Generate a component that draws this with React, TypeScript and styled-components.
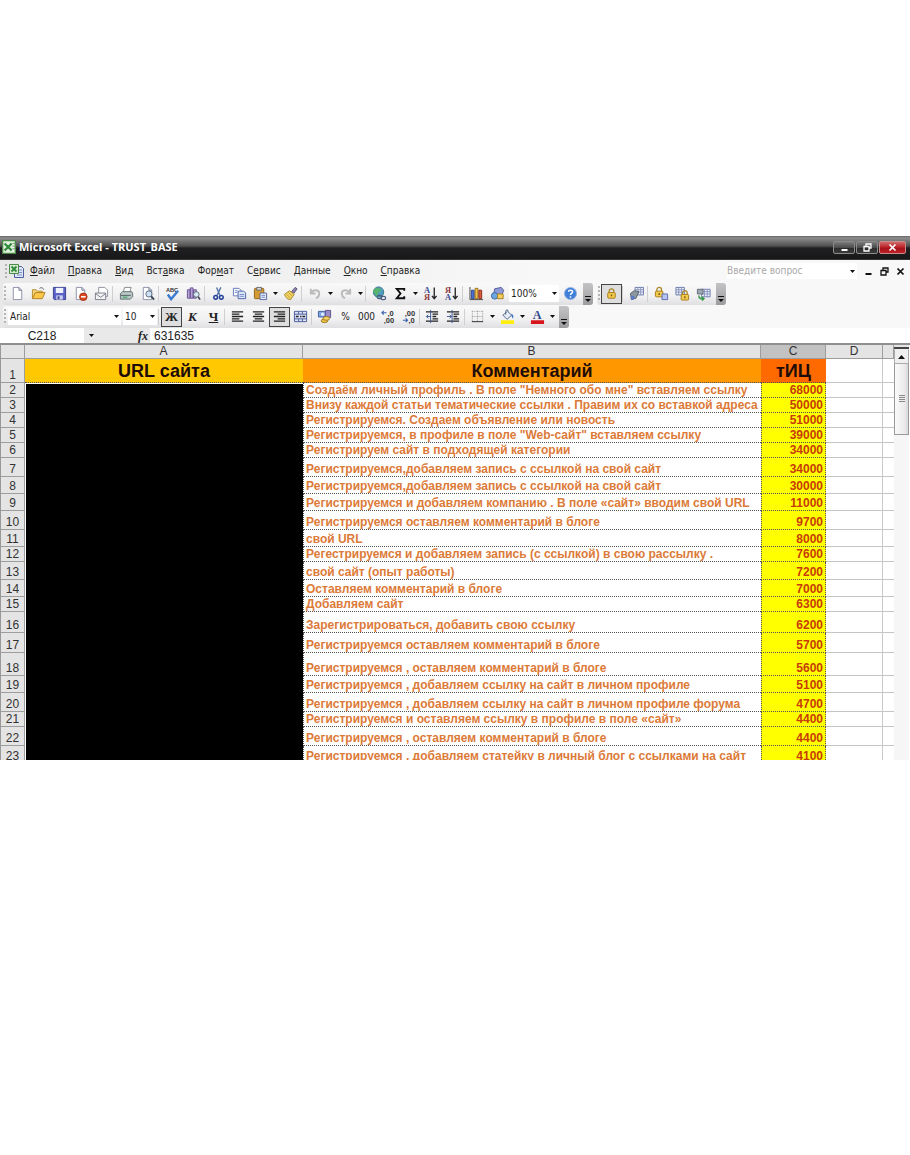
import React from 'react';
import styled, { createGlobalStyle, css } from 'styled-components';

const UI_FONT = '"DejaVu Sans Condensed", "DejaVu Sans", "Noto Sans", sans-serif';
const CELL_FONT = '"Liberation Sans", Arial, sans-serif';

const GlobalStyle = createGlobalStyle`
  * { box-sizing: border-box; }
  body { margin: 0; background: #fff; }
  button, input, select { font: inherit; color: inherit; margin: 0; padding: 0; border: 0; background: none; }
`;

const Page = styled.main`
  padding: 236px 0;
  font-family: ${UI_FONT};
  font-size: 10px;
  color: #222;
`;

const TitleBar = styled.header`
  display: flex;
  align-items: center;
  height: 24px;
  padding: 0 4px 2px 2px;
  gap: 3px;
  background: linear-gradient(#666 0, #8c8c8c 2px, #505050 10px, #202022 12px, #18181a 23px, #555 24px);
`;

const Title = styled.h1`
  flex: 1;
  margin: 0;
  font: bold 11px/16px "Open Sans", "Noto Sans", sans-serif;
  color: #fff;
`;

const WindowButtons = styled.div`
  display: flex;
  gap: 1px;
`;

const WindowButton = styled.button<{ $danger?: boolean }>`
  display: flex;
  align-items: center;
  justify-content: center;
  width: ${p => (p.$danger ? 27 : 22)}px;
  height: 13px;
  border: 1px solid ${p => (p.$danger ? '#c98a8a' : '#8b8b8b')};
  border-radius: 2px;
  background: ${p =>
    p.$danger
      ? 'linear-gradient(#cf6a6a, #b81f25 50%, #a01018 52%, #c02028)'
      : 'linear-gradient(#7c7c7c, #4c4c4c 50%, #2a2a2a 52%, #3a3a3a)'};
`;

const Chrome = styled.div`
  background: linear-gradient(90deg, #e8e8e8, #f8f8f8 60%);
`;

const MenuBar = styled.nav`
  display: flex;
  align-items: center;
  height: 22px;
  padding: 0 4px 0 4px;
`;

const MenuList = styled.div`
  display: flex;
  flex: 1;
  gap: 13px;
  margin-left: 6px;
`;

const MenuItem = styled.button`
  line-height: 16px;
  white-space: nowrap;
  u { text-underline-offset: 1px; }
`;

const Question = styled.div`
  display: flex;
  align-items: center;
  width: 130px;
  height: 16px;
  background: #fff;
  input {
    flex: 1;
    min-width: 0;
    line-height: 14px;
    &::placeholder { color: #a9a9a9; opacity: 1; }
  }
`;

const DocButtons = styled.div`
  display: flex;
  gap: 5px;
  margin-left: 6px;
  button { display: flex; width: 11px; height: 11px; align-items: center; justify-content: center; }
`;

const ToolRow = styled.div<{ $h: number }>`
  display: flex;
  align-items: center;
  height: ${p => p.$h}px;
  padding-left: 3px;
`;

const Toolbar = styled.div<{ $sep: number }>`
  display: flex;
  align-items: center;
  height: 22px;
  margin-right: 4px;
  border-radius: 3px;
  background: linear-gradient(#f9f9f9, #f1f1f2 60%, #dfdfe2);
  --sep: ${p => p.$sep}px;
`;

const Grip = styled.span`
  width: 2px;
  height: 15px;
  margin: 0 1px;
  background: repeating-linear-gradient(#b4b4b4 0 2px, transparent 2px 4px);
`;

const Separator = styled.span`
  width: var(--sep);
  height: 16px;
  border-left: 1px solid #cfcfd2;
`;

const ToolButton = styled.button<{ $on?: boolean; $dim?: boolean }>`
  display: flex;
  align-items: center;
  justify-content: center;
  width: 21px;
  height: 20px;
  opacity: ${p => (p.$dim ? 0.45 : 1)};
  ${p => p.$on && css`
    border: 1px solid #444;
    background: #dedede;
  `}
`;

const ArrowButton = styled.button`
  display: flex;
  align-items: center;
  justify-content: center;
  width: 9px;
  height: 20px;
`;

const OverflowTab = styled.button`
  display: flex;
  align-items: flex-end;
  justify-content: center;
  width: 10px;
  height: 22px;
  margin-left: 2px;
  padding-bottom: 2px;
  border-radius: 0 3px 3px 0;
  background: linear-gradient(#c4c4c6, #9c9c9e);
`;

const ComboBox = styled.div<{ $w: number }>`
  display: flex;
  align-items: center;
  width: ${p => p.$w}px;
  height: 17px;
  margin: 0 1px;
  background: #fff;
  select {
    flex: 1;
    min-width: 0;
    height: 16px;
    padding-left: 2px;
    line-height: 16px;
    appearance: none;
  }
`;

const FormulaRow = styled.div`
  display: flex;
  align-items: center;
  height: 15px;
  background: #e9e9e9;
  font-family: ${CELL_FONT};
  font-size: 12px;
`;

const NameBox = styled.input`
  width: 84px;
  height: 15px;
  background: #fff;
  text-align: center;
`;

const FxArea = styled.div`
  display: flex;
  align-items: center;
  justify-content: space-between;
  width: 66px;
  padding: 0 2px 0 3px;
`;

const FxButton = styled.button`
  font: italic bold 12px/14px "Liberation Serif", serif;
`;

const FormulaInput = styled.input`
  flex: 1;
  min-width: 0;
  height: 15px;
  padding-left: 4px;
  background: #fff;
`;

const Workbook = styled.div`
  display: flex;
  height: 417px;
  overflow: hidden;
  border-top: 2px solid #8f8f8f;
  border-left: 1px solid #999;
`;

const Sheet = styled.table`
  flex: 1;
  width: 100%;
  table-layout: fixed;
  border-collapse: separate;
  border-spacing: 0;
  font-family: ${CELL_FONT};
  align-self: flex-start;
  td, th { padding: 0; }
`;

const Heading = styled.th<{ $active?: boolean }>`
  height: 14px;
  font: 12px/13px ${CELL_FONT};
  color: #333;
  background: ${p => (p.$active ? '#c2c2c2' : '#e4e4e4')};
  border-right: 1px solid #9d9d9d;
  border-bottom: 1px solid #9d9d9d;
`;

const RowHeading = styled(Heading)`
  height: auto;
  vertical-align: bottom;
`;

const Caption = styled.td<{ $bg: string }>`
  height: 24px;
  font: bold 18px/22px ${CELL_FONT};
  text-align: center;
  color: #1d0c08;
  background: ${p => p.$bg};
  border-bottom: 1px dotted #555;
`;

const Hidden = styled.td`
  background: #000;
  border: solid #fff;
  border-width: 1px 0 0 1px;
`;

const Fit = styled.div<{ $h: number }>`
  display: flex;
  align-items: flex-end;
  height: ${p => p.$h - 1}px;
  overflow: hidden;
  line-height: 14px;
  white-space: nowrap;
`;

const Comment = styled.td`
  border: 1px dotted #555;
  border-width: 0 0 1px 1px;
  font-size: 12px;
  font-weight: bold;
  color: #dc7a38;
  ${Fit} { padding-left: 2px; }
`;

const Score = styled.td`
  border: 1px dotted #555;
  border-width: 0 1px 1px 1px;
  font-size: 12px;
  font-weight: bold;
  color: #c73c08;
  background: #ff0;
  ${Fit} { justify-content: flex-end; padding-right: 2px; }
`;

const Blank = styled.td`
  border-right: 1px solid #c9c9c9;
  border-bottom: 1px solid #c4c4c4;
  &:last-child { border-right: 0; }
`;

const ScrollBar = styled.div`
  display: flex;
  flex-direction: column;
  width: 15px;
  margin-right: 1px;
  background: #f6f6f6;
`;

const SplitBox = styled.span`
  height: 4px;
  border-bottom: 2px solid #444;
  background: #e5e5e5;
`;

const ScrollUp = styled.button`
  display: flex;
  align-items: center;
  justify-content: center;
  height: 15px;
  border: 1px solid #aaa;
  border-top-color: #eee;
  background: #efefef;
`;

const ScrollThumb = styled.div`
  display: flex;
  align-items: center;
  justify-content: center;
  height: 71px;
  border: 1px solid #999;
  border-top: 0;
  background: linear-gradient(90deg, #fafafa, #ececec 70%, #d8d8d8);
`;

const Icon = ({ children, size = 16 }: { children: React.ReactNode; size?: number }) => (
  <svg width={size} height={size} viewBox="0 0 16 16" fill="none" aria-hidden="true">{children}</svg>
);

const Caret = () => (
  <svg width="5" height="3" viewBox="0 0 5 3" aria-hidden="true"><path d="M0 0h5L2.5 3z" fill="#111" /></svg>
);

const sheetShape = <><path d="M3.5 1.5h6l3 3v10h-9z" fill="#fff" stroke="#8a8fa8" /><path d="M9.500 1.500v3h3" stroke="#6f7590" /></>;
const padlock = (x: number, y: number) => (
  <g transform={`translate(${x} ${y})`}>
    <path d="M2 5V3a2.500 2.500 0 0 1 5 0v2" stroke="#a98a2c" strokeWidth="1.400" />
    <rect x=".5" y="4.500" width="8" height="6" rx="1" fill="#f2ca4c" stroke="#a87a1a" />
    <path d="M4.500 6.500v2" stroke="#7a5510" strokeWidth="1.400" />
  </g>
);
const miniGrid = (x: number, y: number) => (
  <g transform={`translate(${x} ${y})`}>
    <path d="M.5.5h9v8h-9z" fill="#eef2fb" stroke="#6877a8" />
    <path d="M.5 3h9M.5 5.500h9M3.500.5v8M6.500.5v8" stroke="#8793bd" />
  </g>
);

const icons: Record<string, React.ReactNode> = {
  create: sheetShape,
  open: <><path d="M1.500 13V4h4l1.500 1.500h5V7" fill="#f5d67a" stroke="#b58a2a" /><path d="M1.500 13.500 4.500 7H15l-3 6.500z" fill="#fbc84a" stroke="#b07d1e" /><path d="M9 2.500c2-1.500 4-.5 4.500 1.500" stroke="#666" /></>,
  save: <><path d="M1.500 1.500h13v13h-12l-1-1z" fill="#5a62c8" stroke="#39408f" /><path d="M4 2h8v5.500H4z" fill="#eef1ff" /><path d="M4.500 10h7v4.500h-7z" fill="#c9cdee" /><path d="M6 11h2v3H6z" fill="#39408f" /></>,
  permission: <>{sheetShape}<circle cx="11" cy="11.500" r="4" fill="#dd4a22" stroke="#a62c10" /><path d="M8.500 11.500h5" stroke="#fff" strokeWidth="1.600" /></>,
  mail: <><path d="M5 1.500h6.500l3 3V11H5z" fill="#fff" stroke="#8c909c" /><path d="M1.500 7.500h11v7h-11z" fill="#f4f4f4" stroke="#777c88" /><path d="m1.500 8 5.500 4 5.500-4" stroke="#777c88" /></>,
  print: <><path d="M4.500 6.500 6 1.500h7l-1.500 5" fill="#fff" stroke="#888" /><path d="m1.500 8 2.500-2h9.500l1 1.500v4l-2.500 2.500h-10.500z" fill="#b9c7c6" stroke="#60706f" /><path d="M2 10h10.500" stroke="#4f5f5e" /><path d="M4 12h5" stroke="#57b07c" strokeWidth="1.600" /></>,
  preview: <>{sheetShape}<circle cx="9.500" cy="8.500" r="3.300" fill="#cfe2f5" stroke="#5a6a80" /><path d="m12 11 3 3.500" stroke="#3e4656" strokeWidth="2" /></>,
  spell: <><text x="1" y="6" fontFamily="Liberation Sans, sans-serif" fontSize="6" fontWeight="bold" fill="#333">ABC</text><path d="m3 9 3.500 5L14 5" stroke="#3d7bd0" strokeWidth="2.600" /></>,
  research: <><path d="M1.500 4h3v9h-3zM4.500 2h3v11h-3zM8 4h3v9H8z" fill="#b9a1d4" stroke="#685394" /><circle cx="11" cy="9" r="3" fill="#d8e8f8" stroke="#566" /><path d="m13 11.500 2 3" stroke="#445" strokeWidth="1.800" /></>,
  cut: <><path d="M6 1.500 9.500 10M10.500 1.500 6.500 10" stroke="#5a76a8" strokeWidth="1.500" /><circle cx="5" cy="12" r="2" stroke="#27439a" strokeWidth="1.600" /><circle cx="11" cy="12" r="2" stroke="#27439a" strokeWidth="1.600" /></>,
  copy: <><path d="M1.500 2.500h6l2 2v6h-8z" fill="#fff" stroke="#6074b4" /><path d="M6.500 5.500h6l2 2v6h-8z" fill="#dfe8fb" stroke="#4961a8" /><path d="M8 9h5M8 11h5M3 5h3M3 7h3" stroke="#7289c8" /></>,
  paste: <><rect x="1.500" y="2.500" width="10" height="11" rx="1" fill="#d59a32" stroke="#8d6219" /><path d="M4 1.500h5v3H4z" fill="#d8d8d8" stroke="#666" /><path d="M7.500 7.500h7v7h-7z" fill="#e6ecfa" stroke="#5566a0" /><path d="M9 10h4M9 12h4" stroke="#7289c8" /></>,
  brush: <><path d="m9 6 4-4.500 2 1.500-3.500 5z" fill="#8d7fb0" stroke="#5c5478" /><path d="M1.500 9 7 5l5 4-4 5.500c-3 0-5-2-6.500-5.500z" fill="#f2d463" stroke="#a9872d" /><path d="m4 9 4 4M6 7l4 4" stroke="#c09a38" /></>,
  undo: <path d="M3 3v5h5M3.500 7.500C6 3 12 4 12 8c0 2-1 4-3.500 5" stroke="#777" strokeWidth="2" />,
  redo: <path d="M13 3v5H8M12.500 7.500C10 3 4 4 4 8c0 2 1 4 3.500 5" stroke="#777" strokeWidth="2" />,
  link: <><circle cx="7" cy="6.500" r="5.500" fill="#4f9fc0" stroke="#2f6f86" /><path d="M3 3c3-2 4 0 6 0s0 3-2 4 1 3-1 4-2-3-4-4 0-3 1-4z" fill="#58b46c" /><rect x="5.500" y="10" width="5" height="3.500" rx="1.700" stroke="#4d5f80" strokeWidth="1.300" /><rect x="9.500" y="11" width="5" height="3.500" rx="1.700" stroke="#4d5f80" strokeWidth="1.300" /></>,
  sum: <path d="M12 5V3H4l4 5-4 5h8v-2" stroke="#111" strokeWidth="2" />,
  sortAsc: <><text x="1" y="7.500" fontFamily="Liberation Serif, serif" fontSize="9" fontWeight="bold" fill="#3a4a90">А</text><text x="1" y="15" fontFamily="Liberation Serif, serif" fontSize="9" fontWeight="bold" fill="#8b3a3a">Я</text><path d="M12 1.500v12m-2.500-3 2.500 3 2.500-3" stroke="#222" strokeWidth="1.400" /></>,
  sortDesc: <><text x="1" y="7.500" fontFamily="Liberation Serif, serif" fontSize="9" fontWeight="bold" fill="#8b3a3a">Я</text><text x="1" y="15" fontFamily="Liberation Serif, serif" fontSize="9" fontWeight="bold" fill="#3a4a90">А</text><path d="M12 1.500v12m-2.500-3 2.500 3 2.500-3" stroke="#222" strokeWidth="1.400" /></>,
  chart: <><path d="M2.500 4.500h3v9h-3z" fill="#4a6fd0" stroke="#2c438c" /><path d="M6.500 2.500h3v11h-3z" fill="#f0c04a" stroke="#96701a" /><path d="M10.500 4.500h3v9h-3z" fill="#d85a3a" stroke="#8a2c18" /><path d="M1 1v13.500h14" stroke="#444" /></>,
  draw: <><path d="m5 3 7-1.500 2.500 3-2 6-7 1.500L4 8z" fill="#8f9ad8" stroke="#4e579c" /><circle cx="5" cy="10.500" r="3.500" fill="#6ea6e0" stroke="#3a67a0" /><path d="M8 8.500h6v5H8z" fill="#f3cf5c" stroke="#a27c20" /></>,
  help: <><circle cx="8" cy="8" r="6.500" fill="#3f7fd8" stroke="#9db8e0" /><path d="M5.800 6.200C6 3.800 10.300 4 10.200 6.300 10 8 8 7.800 8 9.700M8 11v1.500" stroke="#fff" strokeWidth="1.600" /></>,
  lock: padlock(3.500, 2.500),
  share: <>{miniGrid(6, 1)}<path d="m1.500 8 4-3 5 1-3 7-5 1.500z" fill="#8d97a0" stroke="#59636e" /><circle cx="4" cy="12.500" r="2" fill="#5a78cc" /></>,
  lockCell: <>{padlock(1, 1)}<path d="M8.500 8.500h6v6h-6z" fill="#b7c4f0" stroke="#5a6bb0" /></>,
  lockSheet: <>{miniGrid(.5, 1)}{padlock(6, 4.500)}</>,
  lockBook: <>{miniGrid(5.500, 3)}<path d="M1.500 3.500h6v5h-6z" fill="#9ea8b4" stroke="#606a78" /><path d="M3 10c0 3 2 4 5 3.500m-2-2 2.500 2-2 2" stroke="#3c9a4c" strokeWidth="1.600" /></>,
  left: <path d="M2 3h12M2 5.500h8M2 8h12M2 10.500h8M2 13h12" stroke="#222" strokeWidth="1.400" />,
  center: <path d="M2 3h12M4 5.500h8M2 8h12M4 10.500h8M2 13h12" stroke="#222" strokeWidth="1.400" />,
  right: <path d="M2 3h12M6 5.500h8M2 8h12M6 10.500h8M2 13h12" stroke="#222" strokeWidth="1.400" />,
  merge: <><path d="M1.500 2.500h13v11h-13z" fill="#dfe6fa" stroke="#4a5a98" /><path d="M1.500 5.500h13M1.500 10.500h13M6 2.500v3M10 2.500v3M6 10.500v3M10 10.500v3" stroke="#4a5a98" /><path d="M3 8h3m4 0h3M7.500 8h1.500" stroke="#222" strokeWidth="1.600" /></>,
  currency: <><path d="M1.500 2.500h10v6h-10z" fill="#7fa6e0" stroke="#3f5e9c" /><path d="M9 1.500h5.500V9H9z" fill="#9a8cc8" stroke="#5f528c" /><circle cx="6" cy="5.500" r="1.700" fill="#e8f0ff" /><ellipse cx="8" cy="12.500" rx="3.500" ry="2" fill="#f1c548" stroke="#99741c" /><ellipse cx="10" cy="10" rx="3.500" ry="2" fill="#f6d468" stroke="#99741c" /></>,
  decMore: <><path d="M7 4H2m2-2L2 4l2 2" stroke="#3b62b0" strokeWidth="1.200" /><text x="8" y="7.500" fontFamily="Liberation Sans, sans-serif" fontSize="8" fontWeight="bold" fill="#333">,0</text><text x="4" y="15" fontFamily="Liberation Sans, sans-serif" fontSize="8" fontWeight="bold" fill="#333">,00</text></>,
  decLess: <><text x="4" y="7.500" fontFamily="Liberation Sans, sans-serif" fontSize="8" fontWeight="bold" fill="#333">,00</text><path d="M2 12h5m-2-2 2 2-2 2" stroke="#3b62b0" strokeWidth="1.200" /><text x="8" y="15" fontFamily="Liberation Sans, sans-serif" fontSize="8" fontWeight="bold" fill="#333">,0</text></>,
  outdent: <><path d="M1 3h13M8 5.500h6M8 8h4M8 10.500h6M1 13h13" stroke="#222" strokeWidth="1.400" /><path d="M6.500 8H1.500m2-2-2 2 2 2M6 1v14" stroke="#3b5590" /></>,
  indent: <><path d="M1 3h13M8 5.500h6M8 8h4M8 10.500h6M1 13h13" stroke="#222" strokeWidth="1.400" /><path d="M1 8h5M4 6l2 2-2 2M6.500 1v14" stroke="#3b5590" /></>,
  borders: <><path d="M2.500 2v11M8 2v11M13.500 2v11M2 2.500h12M2 8h12" stroke="#999" strokeDasharray="1 1" /><path d="M2 13.500h12" stroke="#222" /></>,
  fill: <><path d="m3 6.500 5-4 4.500 4-5 4.500z" fill="#e5ecf6" stroke="#56688a" /><path d="M6 6V2.500c0-2 3-2 3 0" stroke="#56688a" /><path d="M12 5c2.500 1 2.500 3 2 5-1.500-1-2-2.500-2-5z" fill="#3f74c8" /><path d="M1 12h14v4H1z" fill="#ffee10" /></>,
  fontColor: <><text x="3" y="11" fontFamily="Liberation Serif, serif" fontSize="13" fontWeight="bold" fill="#34498c">A</text><path d="M1 12h14v4H1z" fill="#d8141c" /></>,
  excel: <><path d="M.5.5h15v15H.5z" fill="#e6f2e2" stroke="#4c8a48" strokeWidth="2" /><path d="m3 4 8 8M11 4l-8 8" stroke="#2f8a3a" strokeWidth="2.600" /><path d="M12 4h3M12 7h3M12 10h3" stroke="#6a9a68" /></>,
  book: <><path d="M6.500 3.500h7l2 2v9h-9z" fill="#dfe6f8" stroke="#4d5fa0" /><path d="M9 7h5M9 9.500h5M9 12h5" stroke="#7f90c8" /><path d="M1.500 1.500h9v9h-9z" fill="#d8ecd4" stroke="#4c8a48" /><path d="m3.500 3.500 5 5M8.500 3.500l-5 5" stroke="#2f8a3a" strokeWidth="1.800" /></>,
};

const GlyphText = styled.span<{ $serif?: boolean; $italic?: boolean; $line?: boolean }>`
  font-family: ${p => (p.$serif ? '"Liberation Serif", serif' : UI_FONT)};
  font-size: ${p => (p.$serif ? 13 : 10)}px;
  font-weight: ${p => (p.$serif ? 'bold' : 'normal')};
  font-style: ${p => (p.$italic ? 'italic' : 'normal')};
  text-decoration: ${p => (p.$line ? 'underline' : 'none')};
  line-height: 16px;
`;

const Tool = ({ name, label, on, dim }: { name: string; label: string; on?: boolean; dim?: boolean }) => (
  <ToolButton type="button" aria-label={label} aria-pressed={on} $on={on} $dim={dim}><Icon size={15}>{icons[name]}</Icon></ToolButton>
);

const Drop = ({ label }: { label: string }) => (
  <ArrowButton type="button" aria-label={label}><Caret /></ArrowButton>
);

const Overflow = () => (
  <OverflowTab type="button" aria-label="Параметры панели">
    <svg width="6" height="7" viewBox="0 0 6 7" aria-hidden="true"><path d="M0 .5h6" stroke="#111" /><path d="M0 3h6L3 6z" fill="#111" /></svg>
  </OverflowTab>
);

const Combo = ({ label, value, w }: { label: string; value: string; w: number }) => (
  <ComboBox $w={w}>
    <select aria-label={label} defaultValue={value}><option>{value}</option></select>
    <Drop label={label} />
  </ComboBox>
);

const menus: [string, string, string][] = [
  ['', 'Ф', 'айл'], ['', 'П', 'равка'], ['', 'В', 'ид'], ['Вст', 'а', 'вка'], ['Фор', 'м', 'ат'],
  ['С', 'е', 'рвис'], ['', 'Д', 'анные'], ['', 'О', 'кно'], ['', 'С', 'правка'],
];

const rows: [number, string, number][] = [
  [15, 'Создаём личный профиль . В поле "Немного обо мне" вставляем ссылку', 68000],
  [15, 'Внизу каждой статьи тематические ссылки . Правим их со вставкой адреса сайта', 50000],
  [15, 'Регистрируемся. Создаем объявление или новость', 51000],
  [15, 'Регистрируемся, в профиле в поле "Web-сайт" вставляем ссылку', 39000],
  [15, 'Регистрируем сайт в подходящей категории', 34000],
  [19, 'Регистрируемся,добавляем запись с ссылкой на свой сайт', 34000],
  [17, 'Регистрируемся,добавляем запись с ссылкой на свой сайт', 30000],
  [17, 'Регистрируемся и добавляем компанию . В поле «сайт» вводим свой URL', 11000],
  [19, 'Регистрируемся оставляем комментарий в блоге', 9700],
  [17, 'свой URL', 8000],
  [15, 'Регестрируемся и добавляем запись (с ссылкой) в свою рассылку .', 7600],
  [18, 'свой сайт (опыт работы)', 7200],
  [17, 'Оставляем комментарий в блоге', 7000],
  [15, 'Добавляем сайт', 6300],
  [21, 'Зарегистрироваться, добавить свою ссылку', 6200],
  [20, 'Регистрируемся оставляем комментарий в блоге', 5700],
  [23, 'Регистрируемся , оставляем комментарий в блоге', 5600],
  [17, 'Регистрируемся , добавляем ссылку на сайт в личном профиле', 5100],
  [19, 'Регистрируемся , добавляем ссылку на сайт в личном профиле форума', 4700],
  [15, 'Регистрируемся и оставляем ссылку в профиле в поле «сайт»', 4400],
  [19, 'Регистрируемся , оставляем комментарий в блоге', 4400],
  [18, 'Регистрируемся , добавляем статейку в личный блог с ссылками на сайт', 4100],
];

const MinGlyph = ({ color }: { color: string }) => (
  <svg width="9" height="9" viewBox="0 0 9 9" aria-hidden="true"><path d="M1.500 7h6" stroke={color} strokeWidth="2" /></svg>
);
const RestoreGlyph = ({ color }: { color: string }) => (
  <svg width="9" height="9" viewBox="0 0 9 9" fill="none" aria-hidden="true"><path d="M3 3V1h5v4H6M1 3.500h5V8H1z" stroke={color} strokeWidth="1.300" /></svg>
);
const CloseGlyph = ({ color }: { color: string }) => (
  <svg width="9" height="9" viewBox="0 0 9 9" fill="none" aria-hidden="true"><path d="m1.500 1.500 6 6m0-6-6 6" stroke={color} strokeWidth="1.700" /></svg>
);

export default function App() {
  return (
    <Page>
      <GlobalStyle />
      <TitleBar>
        <Icon size={14}>{icons.excel}</Icon>
        <Title>Microsoft Excel - TRUST_BASE</Title>
        <WindowButtons>
          <WindowButton type="button" aria-label="Свернуть"><MinGlyph color="#fff" /></WindowButton>
          <WindowButton type="button" aria-label="Восстановить"><RestoreGlyph color="#fff" /></WindowButton>
          <WindowButton type="button" aria-label="Закрыть" $danger><CloseGlyph color="#fff" /></WindowButton>
        </WindowButtons>
      </TitleBar>
      <Chrome>
        <MenuBar>
          <Grip />
          <Icon>{icons.book}</Icon>
          <MenuList>
            {menus.map(([a, b, c]) => <MenuItem type="button" key={a + b + c}>{a}<u>{b}</u>{c}</MenuItem>)}
          </MenuList>
          <Question>
            <input aria-label="Введите вопрос" placeholder="Введите вопрос" />
            <Drop label="Вопросы" />
          </Question>
          <DocButtons>
            <button type="button" aria-label="Свернуть книгу"><MinGlyph color="#111" /></button>
            <button type="button" aria-label="Восстановить книгу"><RestoreGlyph color="#111" /></button>
            <button type="button" aria-label="Закрыть книгу"><CloseGlyph color="#111" /></button>
          </DocButtons>
        </MenuBar>
        <ToolRow $h={23}>
          <Toolbar $sep={4}>
            <Grip />
            <Tool name="create" label="Создать" />
            <Tool name="open" label="Открыть" />
            <Tool name="save" label="Сохранить" />
            <Tool name="permission" label="Разрешения" />
            <Tool name="mail" label="Сообщение" />
            <Separator />
            <Tool name="print" label="Печать" />
            <Tool name="preview" label="Просмотр" />
            <Separator />
            <Tool name="spell" label="Орфография" />
            <Tool name="research" label="Справочные материалы" />
            <Separator />
            <Tool name="cut" label="Вырезать" />
            <Tool name="copy" label="Копировать" />
            <Tool name="paste" label="Вставить" />
            <Drop label="Параметры вставки" />
            <Tool name="brush" label="Формат по образцу" />
            <Separator />
            <Tool name="undo" label="Отменить" dim />
            <Drop label="Список отмены" />
            <Tool name="redo" label="Вернуть" dim />
            <Drop label="Список возврата" />
            <Separator />
            <Tool name="link" label="Гиперссылка" />
            <Tool name="sum" label="Автосумма" />
            <Drop label="Функции" />
            <Tool name="sortAsc" label="По возрастанию" />
            <Tool name="sortDesc" label="По убыванию" />
            <Separator />
            <Tool name="chart" label="Диаграмма" />
            <Tool name="draw" label="Рисование" />
            <Combo label="Масштаб" value="100%" w={50} />
            <Tool name="help" label="Помощь" />
            <Overflow />
          </Toolbar>
          <Toolbar $sep={4}>
            <Grip />
            <Tool name="lock" label="Блокировка" on />
            <Separator />
            <Tool name="share" label="Общий доступ" />
            <Separator />
            <Tool name="lockCell" label="Защитить ячейку" />
            <Tool name="lockSheet" label="Защитить лист" />
            <Tool name="lockBook" label="Защитить книгу" />
            <Overflow />
          </Toolbar>
        </ToolRow>
        <ToolRow $h={23}>
          <Toolbar $sep={3}>
            <Grip />
            <Combo label="Шрифт" value="Arial" w={113} />
            <Combo label="Размер" value="10" w={34} />
            <Separator />
            <ToolButton type="button" aria-label="Полужирный" aria-pressed $on><GlyphText $serif>Ж</GlyphText></ToolButton>
            <ToolButton type="button" aria-label="Курсив"><GlyphText $serif $italic>К</GlyphText></ToolButton>
            <ToolButton type="button" aria-label="Подчеркнутый"><GlyphText $serif $line>Ч</GlyphText></ToolButton>
            <Separator />
            <Tool name="left" label="По левому краю" />
            <Tool name="center" label="По центру" />
            <Tool name="right" label="По правому краю" on />
            <Tool name="merge" label="Объединить" />
            <Separator />
            <Tool name="currency" label="Денежный формат" />
            <ToolButton type="button" aria-label="Процентный формат"><GlyphText>%</GlyphText></ToolButton>
            <ToolButton type="button" aria-label="Формат с разделителями"><GlyphText>000</GlyphText></ToolButton>
            <Tool name="decMore" label="Увеличить разрядность" />
            <Tool name="decLess" label="Уменьшить разрядность" />
            <Separator />
            <Tool name="outdent" label="Уменьшить отступ" />
            <Tool name="indent" label="Увеличить отступ" />
            <Separator />
            <Tool name="borders" label="Границы" />
            <Drop label="Виды границ" />
            <Tool name="fill" label="Цвет заливки" />
            <Drop label="Цвета заливки" />
            <Tool name="fontColor" label="Цвет шрифта" />
            <Drop label="Цвета шрифта" />
            <Overflow />
          </Toolbar>
        </ToolRow>
      </Chrome>
      <FormulaRow>
        <NameBox aria-label="Имя ячейки" defaultValue="C218" />
        <FxArea>
          <Drop label="Список имен" />
          <FxButton type="button">fx</FxButton>
        </FxArea>
        <FormulaInput aria-label="Строка формул" defaultValue="631635" />
      </FormulaRow>
      <Workbook>
        <Sheet>
          <colgroup>
            <col style={{ width: 24 }} /><col style={{ width: 278 }} /><col />
            <col style={{ width: 65 }} /><col style={{ width: 57 }} /><col style={{ width: 11 }} />
          </colgroup>
          <thead>
            <tr>
              <Heading /><Heading scope="col">A</Heading><Heading scope="col">B</Heading>
              <Heading scope="col" $active>C</Heading><Heading scope="col">D</Heading><Heading />
            </tr>
          </thead>
          <tbody>
            <tr>
              <RowHeading scope="row"><Fit $h={24}><RowNumber n={1} /></Fit></RowHeading>
              <Caption $bg="#ffc800">URL сайта</Caption>
              <Caption $bg="#ff9800">Комментарий</Caption>
              <Caption $bg="#ff6a00">тИЦ</Caption>
              <Blank /><Blank />
            </tr>
            {rows.map(([h, text, score], i) => (
              <tr key={i}>
                <RowHeading scope="row"><Fit $h={h}><RowNumber n={i + 2} /></Fit></RowHeading>
                {i === 0 && <Hidden rowSpan={rows.length} />}
                <Comment><Fit $h={h}>{text}</Fit></Comment>
                <Score><Fit $h={h}>{score}</Fit></Score>
                <Blank /><Blank />
              </tr>
            ))}
          </tbody>
        </Sheet>
        <ScrollBar>
          <SplitBox />
          <ScrollUp type="button" aria-label="Прокрутить вверх">
            <svg width="7" height="4" viewBox="0 0 7 4" aria-hidden="true"><path d="M0 4h7L3.500 0z" fill="#111" /></svg>
          </ScrollUp>
          <ScrollThumb>
            <svg width="6" height="8" viewBox="0 0 6 8" aria-hidden="true"><path d="M0 .5h6M0 2.500h6M0 4.500h6M0 6.500h6" stroke="#888" /></svg>
          </ScrollThumb>
        </ScrollBar>
      </Workbook>
    </Page>
  );
}

const NumberLabel = styled.span`
  flex: 1;
  text-align: center;
`;

function RowNumber({ n }: { n: number }) {
  return <NumberLabel>{n}</NumberLabel>;
}
